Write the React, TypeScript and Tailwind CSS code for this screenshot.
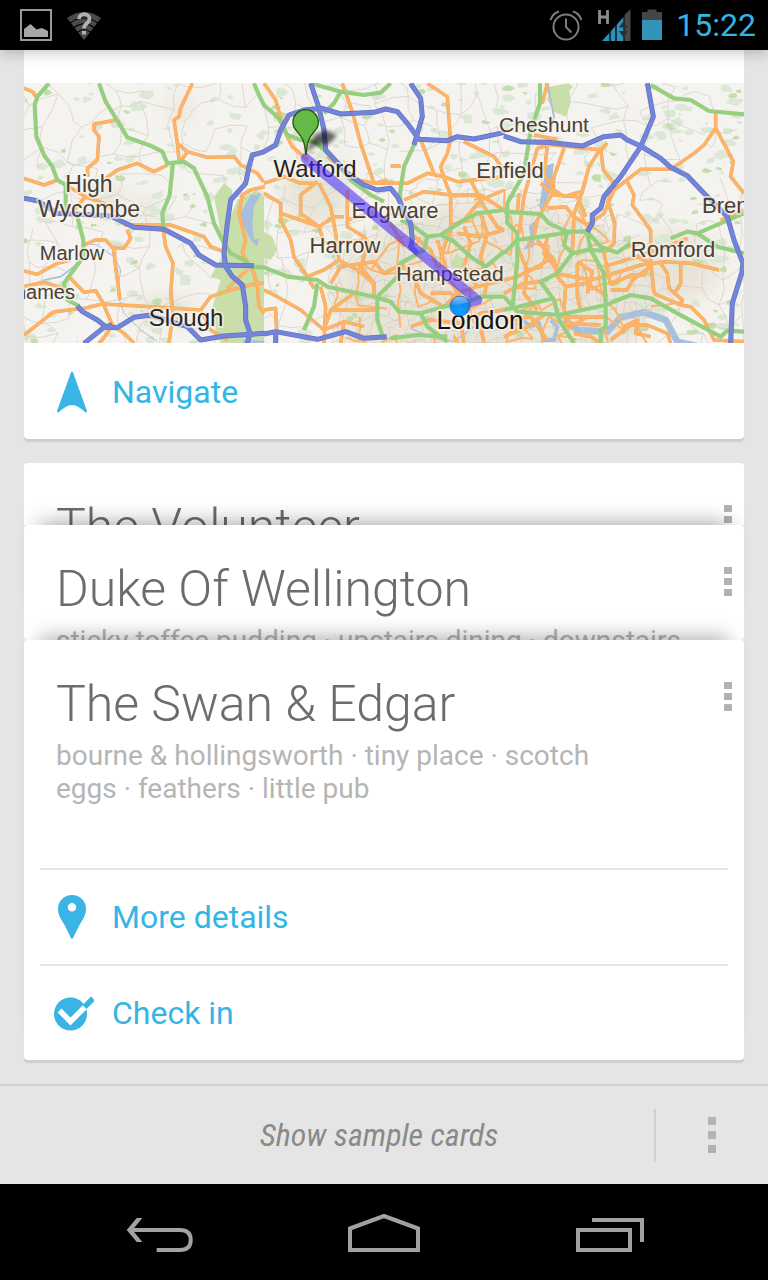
import React from "react";

type Pt = [number, number];

/* Road data is kept in three side-by-side tiles, each 720 units wide. */
const TILES = [
  {
    x: 0,
    green: [
      "75,10 40,50 32,75 37,170 60,225 85,260 100,300 125,315 125,390",
      "160,410 178,480 178,530 145,575 120,610 130,660 165,678",
      "225,10 245,65 285,130 310,172 340,183 380,197 415,215 430,250 480,245 510,265 550,350 570,430 600,490 620,520 660,540 680,560 722,562",
      "447,250 437,345 415,400 418,440",
      "690,10 705,45 722,80",
    ],
    orange: [
      "0,25 25,35 40,55",
      "505,10 470,85 465,110 450,120 460,190 490,215 550,232 630,230 650,255 700,280 718,305",
      "460,190 465,240",
      "490,215 470,245",
      "275,120 210,133 210,150 225,170 220,240 190,265 192,290",
      "245,295 280,270 340,250 390,275 430,255",
      "0,295 60,315 100,300",
      "120,312 185,350 240,370 275,395",
      "185,350 150,390",
      "300,435 440,435 540,470 560,500 600,515",
      "418,450 425,500 447,550 440,640 447,700 435,790",
      "180,495 215,480 245,480 268,505 300,505 320,475 310,450",
      "268,505 275,560 288,660",
      "0,573 40,583 100,550 140,540",
      "140,595 180,637 215,632 235,665 265,735 250,760 225,790",
      "0,620 60,607 120,625",
      "0,765 90,695 180,685 235,672 380,680 450,685 530,690 560,650 620,630 700,610 720,610",
      "265,735 300,760 330,790",
      "530,690 560,750 610,780",
      "722,320 680,330 655,345 645,400 665,480 655,520 690,580 700,620 705,680 720,700",
      "610,625 670,570",
    ],
    blue: [
      "0,355 40,362 100,400 150,402 260,408 330,442 420,448 500,490 525,525 575,555 690,557",
      "722,215 685,225 675,260 665,310 620,360 610,430 600,520 605,560 625,590 655,615 665,680 665,720 678,760 670,790",
      "160,678 175,695 220,720 245,740 265,735",
      "180,790 240,742 280,743 330,712 375,706 410,715 490,740 530,780 600,768 722,760",
    ],
  },
  {
    x: 720,
    green: [
      "0,75 45,115 70,165 110,180 150,185 200,225 260,300 320,345 360,365",
      "140,10 230,35 300,45 350,38 380,10",
      "230,35 210,70 180,100",
      "450,195 420,260 408,340 410,370",
      "410,420 450,440 490,470 530,465 600,420 640,400 720,390",
      "530,465 570,485 620,530 665,560 720,515",
      "490,470 480,510 410,550 400,590 340,650 340,720 360,780",
      "0,562 70,590 160,600 190,620 330,650 380,665 405,695 470,700 540,680 600,670 650,650 722,650",
      "160,610 150,680 120,750",
      "470,700 490,740 550,785",
      "380,775 460,765 550,770",
    ],
    orange: [
      "0,10 35,60 60,150 85,200 130,240",
      "235,10 265,95 290,190 330,310",
      "490,10 550,50 558,160 560,180 550,220 530,260 540,295 560,345 560,440 535,520",
      "470,180 510,280",
      "600,185 690,230 720,270",
      "380,258 410,258",
      "0,310 60,290 110,310 150,310",
      "0,340 50,370 50,420 80,480 90,530 130,590 150,625",
      "160,305 110,345 110,400 165,440 210,410 240,410",
      "165,310 200,380 215,460 225,540",
      "50,400 110,420 165,440 180,490 260,485 300,480",
      "330,310 430,310 490,280 540,290 580,305 720,290",
      "420,360 480,335 560,345 650,345 720,390",
      "250,330 250,440 300,470 310,500 290,560 330,610",
      "190,230 280,300 330,310 370,300",
      "250,420 320,400 380,430 420,500",
      "200,610 230,560 330,545 360,580 410,555",
      "225,540 280,570 330,610 330,650",
      "130,590 180,570 225,540",
      "0,630 40,650 110,690 180,750 240,725 300,740",
      "0,690 35,685 38,755",
      "180,750 200,690 270,640",
      "205,690 340,690",
      "170,620 185,680 180,790",
      "240,725 230,790",
      "410,550 450,590 470,640 540,680",
      "440,460 500,510 520,560 600,600",
      "520,480 545,560 570,620 600,670",
      "600,440 620,490 600,560 640,620",
      "560,440 600,420 650,360 720,330",
      "620,300 660,380 700,440 720,450",
      "580,460 650,470 720,450",
      "650,400 670,460 650,530 670,600 660,650",
      "540,680 580,640 640,620 720,600",
      "440,740 500,720 590,730 650,700 720,690",
      "590,730 600,790",
      "640,700 660,790",
      "500,640 560,640 600,670",
    ],
    blue: [
      "0,215 35,195 50,150 75,105 120,90 175,85 230,102 330,97 365,87 400,95 430,130 465,178 550,182 580,170 630,177 722,157",
      "140,10 165,85 180,150 185,210 250,280 300,315 340,330 380,325 400,350 440,430 445,480 440,500 460,520",
      "440,10 470,55 475,110 450,195",
      "0,762 35,755 160,778 245,755 300,775 368,770",
      "35,750 35,790",
    ],
  },
  {
    x: 1440,
    green: [
      "108,10 108,70 80,150 60,280 10,370 10,430 40,460 40,540 25,690",
      "0,395 110,402 135,430 190,455 250,455 290,500 340,518 380,490",
      "0,520 40,480 130,467 210,455",
      "250,460 260,510 300,580 305,660 305,740 290,750 290,790",
      "190,455 180,495 205,520 160,580 110,605 150,660 165,720 210,790",
      "205,520 250,510 300,512",
      "0,690 150,655",
      "0,650 40,695 165,705 305,675 380,645 440,655 520,700 650,770 670,752 720,755",
      "440,15 510,55 560,60 615,93 720,103",
      "500,475 550,455 580,460 720,400",
      "580,460 640,500 720,520",
    ],
    orange: [
      "130,10 115,70",
      "90,165 155,178 120,200 100,205 60,350 45,460",
      "180,205 150,290 145,340 100,420 90,470",
      "130,200 120,280 150,330 180,350 230,335",
      "95,190 200,200 290,210 310,190",
      "290,205 255,260 230,350 210,400 205,520",
      "290,205 298,270 330,310 310,370",
      "500,268 410,268 330,330 300,400 250,435 210,410 185,380 130,385",
      "500,268 570,220 600,195 635,145 635,100",
      "635,145 665,200 688,245 680,290 720,340",
      "370,305 390,345 385,375 440,450 440,540 450,640",
      "315,375 332,430 330,490 300,520 320,615",
      "110,310 150,345 220,350 245,410",
      "45,340 40,400",
      "100,480 150,540 160,590 185,620",
      "0,600 40,590 100,560 150,530",
      "40,500 70,570 60,640 100,690",
      "110,605 60,610 0,640",
      "150,580 260,600 300,590 410,555 480,545 560,550 645,570",
      "220,550 220,650 230,690",
      "220,545 265,575 250,640",
      "180,620 250,610 310,650",
      "185,620 180,690 200,740 250,710",
      "300,560 400,530 440,550",
      "320,630 370,630 385,600 440,560",
      "320,615 380,585 420,585 440,550",
      "470,550 490,580 495,625 535,660 530,675",
      "530,550 530,610 515,635",
      "450,640 530,675 560,680 600,720 630,780 720,785",
      "165,710 300,712",
      "170,730 290,735",
      "320,780 380,735 430,735 490,760 500,790",
      "360,740 400,720 395,760 440,770",
      "0,720 80,710 130,780",
      "0,770 70,740 120,705",
      "210,760 260,770 290,790",
      "550,475 490,500 400,530",
      "720,390 650,420",
      "130,470 120,520 160,570",
    ],
    blue: [
      "0,168 50,185 130,187 235,198 300,170 350,165 370,180 410,198 470,235 500,262 550,287 600,340 670,410 690,480 717,550 713,580 685,670 680,790",
      "430,10 448,110 410,200 350,290 300,350 290,385 265,405 265,430 250,455",
    ],
  },
];

function makeRandom(seed: number) {
  let s = seed;
  return () => {
    s = (s * 16807) % 2147483647;
    return s / 2147483647;
  };
}

const inCity = (x: number, y: number) => ((x - 1390) / 500) ** 2 + ((y - 640) / 320) ** 2 < 1;

/* Country lanes and city streets: a jittered mesh with some edges left out. */
function streets(step: number, keep: number, seed: number, city: boolean) {
  const rnd = makeRandom(seed);
  const cols = Math.ceil(2160 / step) + 1;
  const rows = Math.ceil(800 / step) + 1;
  const grid: Pt[][] = [];
  for (let r = 0; r < rows; r++) {
    grid.push([]);
    for (let c = 0; c < cols; c++) {
      grid[r].push([Math.round((c + (rnd() - 0.5) * 0.9) * step), Math.round((r + (rnd() - 0.5) * 0.9) * step)]);
    }
  }
  let d = "";
  const edge = (a: Pt, b: Pt) => {
    const drop = rnd() > keep;
    const mx = Math.round((a[0] + b[0]) / 2 + (rnd() - 0.5) * step * 0.3);
    const my = Math.round((a[1] + b[1]) / 2 + (rnd() - 0.5) * step * 0.3);
    if (drop || (city && !inCity(a[0], a[1]))) return;
    d += `M${a[0]},${a[1]}L${mx},${my}L${b[0]},${b[1]}`;
  };
  for (let r = 0; r < rows; r++) {
    for (let c = 0; c < cols; c++) {
      if (c + 1 < cols) edge(grid[r][c], grid[r][c + 1]);
      if (r + 1 < rows) edge(grid[r][c], grid[r + 1][c]);
    }
  }
  return d;
}

function patches(count: number, size: number, seed: number) {
  const rnd = makeRandom(seed);
  let d = "";
  for (let i = 0; i < count; i++) {
    const x = rnd() * 2160;
    const y = rnd() * 800;
    const n = 5 + Math.floor(rnd() * 3);
    const r = size * (0.4 + rnd());
    for (let k = 0; k < n; k++) {
      const a = (k / n) * Math.PI * 2;
      const q = r * (0.4 + rnd() * 0.7);
      d += `${k ? "L" : "M"}${Math.round(x + Math.cos(a) * q * 1.3)},${Math.round(y + Math.sin(a) * q * 0.8)}`;
    }
    d += "Z";
  }
  return d;
}

const LANES = streets(72, 0.68, 77, false);
const CITY_LANES = streets(34, 0.6, 911, true);
const CITY_ROADS = streets(56, 0.4, 4242, true);
const PALE_PATCHES = patches(420, 17, 31);
const GREEN_PATCHES = patches(120, 12, 73);

function Roads({ kind, color, width }: { kind: "green" | "orange" | "blue"; color: string; width: number }) {
  return (
    <g fill="none" stroke={color} strokeWidth={width} strokeLinejoin="round" strokeLinecap="butt">
      {TILES.map((t) => (
        <g key={t.x} transform={`translate(${t.x} 0)`}>
          {t[kind].map((p) => (
            <polyline key={p} points={p} />
          ))}
        </g>
      ))}
    </g>
  );
}

const LABELS: { t: string; x: number; y: number; s: number; c: string; a?: "start" | "middle" | "end" }[] = [
  { t: "High", x: 65, y: 109, s: 23, c: "#4a3f35" },
  { t: "Wycombe", x: 65, y: 134, s: 23, c: "#4a3f35" },
  { t: "Marlow", x: 48, y: 177, s: 20, c: "#4a3f35" },
  { t: "Thames", x: 51, y: 216, s: 20, c: "#4a3f35", a: "end" },
  { t: "Slough", x: 162, y: 243, s: 24, c: "#2a2420" },
  { t: "Watford", x: 291, y: 94, s: 24, c: "#2a2420" },
  { t: "Edgware", x: 371, y: 135, s: 22, c: "#4a3f35" },
  { t: "Harrow", x: 321, y: 170, s: 22, c: "#4a3f35" },
  { t: "Hampstead", x: 426, y: 198, s: 21, c: "#4a3f35" },
  { t: "London", x: 456, y: 246, s: 26, c: "#111111" },
  { t: "Cheshunt", x: 520, y: 49, s: 21, c: "#4a3f35" },
  { t: "Enfield", x: 486, y: 95, s: 22, c: "#4a3f35" },
  { t: "Romford", x: 649, y: 174, s: 22, c: "#4a3f35" },
  { t: "Brentwood", x: 678, y: 130, s: 22, c: "#4a3f35", a: "start" },
];

function RouteMap() {
  return (
    <svg
      viewBox="0 0 720 260"
      preserveAspectRatio="xMidYMid slice"
      className="block h-[260px] w-full"
      role="img"
      aria-label="Route from Watford to London"
    >
      <defs>
        <filter id="soft" x="-20%" y="-20%" width="140%" height="140%">
          <feGaussianBlur stdDeviation="30" />
        </filter>
        <filter id="pinShade" x="-50%" y="-50%" width="200%" height="200%">
          <feGaussianBlur stdDeviation="7" />
        </filter>
        <radialGradient id="dot" cx="50%" cy="75%" r="75%">
          <stop offset="0" stopColor="#12a0ff" />
          <stop offset="0.6" stopColor="#1589f2" />
          <stop offset="1" stopColor="#1c5fc0" />
        </radialGradient>
        <linearGradient id="gloss" x1="0" y1="0" x2="0" y2="1">
          <stop offset="0" stopColor="#ffffff" stopOpacity="0.55" />
          <stop offset="1" stopColor="#ffffff" stopOpacity="0.1" />
        </linearGradient>
      </defs>
      <g transform="translate(0 -3) scale(0.33333)">
        <rect width="2160" height="800" fill="#f4f3ef" />
        <g fill="#e9e4d8" filter="url(#soft)">
          <ellipse cx="1400" cy="660" rx="480" ry="300" />
          <ellipse cx="880" cy="330" rx="110" ry="110" />
          <ellipse cx="1950" cy="560" rx="140" ry="110" />
          <ellipse cx="420" cy="690" rx="100" ry="40" />
          <ellipse cx="250" cy="360" rx="60" ry="45" />
          <ellipse cx="375" cy="390" rx="40" ry="40" />
          <ellipse cx="470" cy="90" rx="40" ry="40" />
        </g>
        <path d={PALE_PATCHES} fill="#dce8d6" />
        <path d={GREEN_PATCHES} fill="#c4deab" />
        <g fill="#c9dfaa">
          <path d="M600,310 625,330 615,420 640,360 700,330 720,350V790H590L560,700 590,600 560,590 600,520 580,400 570,350Z" />
          <path d="M1575,20 1635,10 1640,70 1625,110 1590,95 1570,60Z" />
          <path d="M720,455 745,470 760,510 740,540 720,535Z" />
          <path d="M1285,540 1300,520 1320,550 1310,570 1280,555Z" />
        </g>
        <g fill="#a5bfdd">
          <path d="M680,345 712,340 690,380 685,430 690,480 705,475 700,500 680,480 660,440 650,400Z" />
          <path d="M1570,255 1590,250 1580,330 1555,390 1545,380 1555,320Z" />
          <path d="M1515,440 1535,420 1530,500 1500,510 1520,470Z" />
          <path d="M660,780 720,782V800H650Z" />
        </g>
        <g fill="none" stroke="#a5bfdd">
          <path d="M1620,720 1660,750 1750,755 1790,712 1860,697 1925,720 1960,785 2050,805" strokeWidth="20" />
          <path d="M1440,720 1490,715 1520,740 1545,730 1560,780 1590,780 1600,740 1580,720" strokeWidth="12" />
          <path d="M1570,10 1580,60 1590,110 1580,150" strokeWidth="6" />
          <path d="M180,490 220,495 270,530 290,570 280,640 300,700 350,750 400,785" strokeWidth="3" />
          <path d="M60,600 110,590 150,560 180,520" strokeWidth="5" />
          <path d="M1130,545 1180,520 1200,510" strokeWidth="6" />
          <path d="M1160,745 1230,775 1290,785 1350,740" strokeWidth="4" />
        </g>
        <path d={LANES} fill="none" stroke="#d6cdc4" strokeWidth="2.2" />
        <path d={CITY_LANES} fill="none" stroke="#d0c7bd" strokeWidth="2" />
        <path d={CITY_ROADS} fill="none" stroke="#fdb56c" strokeWidth="6" strokeLinejoin="round" />
        <Roads kind="orange" color="#f0a055" width={10.5} />
        <Roads kind="orange" color="#feb467" width={8.5} />
        <Roads kind="green" color="#96cf80" width={12.5} />
        <Roads kind="blue" color="#6171bd" width={15} />
        <Roads kind="blue" color="#7384db" width={11} />
      </g>
      <g
        fontFamily="'Liberation Sans', Arial, sans-serif"
        stroke="#f7f5f1"
        strokeOpacity="0.65"
        strokeWidth="4"
        strokeLinejoin="round"
        paintOrder="stroke"
      >
        {LABELS.map((l) => (
          <text key={l.t} x={l.x} y={l.y} fontSize={l.s} fill={l.c} textAnchor={l.a ?? "middle"}>
            {l.t}
          </text>
        ))}
      </g>
      <g transform="translate(240 -3) scale(0.33333)">
        <path
          d="M125,235 640,660 605,670"
          fill="none"
          stroke="#3c1eff"
          strokeOpacity="0.53"
          strokeWidth="30"
          strokeLinecap="round"
          strokeLinejoin="round"
        />
        <path d="M124,220 150,165 185,150 220,165 195,192 155,196Z" fill="#000" fillOpacity="0.6" filter="url(#pinShade)" />
        <path
          d="M125,222C122,178 112,170 97,152 82,134 85,113 97,101 113,85 137,85 153,101 165,113 168,134 153,152 138,170 129,178 127,222Z"
          fill="#65b946"
          stroke="#24590f"
          strokeWidth="4"
        />
        <circle cx="588" cy="678" r="30" fill="url(#dot)" stroke="#1d63b8" strokeWidth="2" />
        <path d="M562,672C564,654 575,650 588,650 601,650 612,656 614,670 600,664 580,682 562,672Z" fill="url(#gloss)" />
      </g>
    </svg>
  );
}

function Kebab({ large = false }: { large?: boolean }) {
  const dot = large ? "size-2 bg-[#b2b2b2]" : "h-[7px] w-2 bg-[#b2b2b2]";
  return (
    <span className={large ? "flex flex-col gap-[6px]" : "flex flex-col gap-1"}>
      <span className={dot} />
      <span className={dot} />
      <span className={dot} />
    </span>
  );
}

function PlaceHeader({ name, children }: { name: string; children?: React.ReactNode }) {
  return (
    <div className="flex items-start justify-between pt-[30px] pr-3 pl-8">
      <div className="min-w-0">
        <h2 className="text-[50px] leading-[68px] font-light whitespace-nowrap text-[#6c6c6c]">{name}</h2>
        <p className="pt-px text-[28px] leading-[33px] text-[#b5b5b5]">{children}</p>
      </div>
      <button type="button" aria-label={`Options for ${name}`} className="mt-3 shrink-0">
        <Kebab />
      </button>
    </div>
  );
}

function Action({ icon, divider = false, children }: { icon: React.ReactNode; divider?: boolean; children: React.ReactNode }) {
  return (
    <div className={`mx-4 border-t-2 ${divider ? "border-[#e5e5e5]" : "border-transparent"}`}>
      <button type="button" className="flex h-[94px] w-full items-center gap-4 px-2 text-left text-[32px] text-[#33b5e5]">
        <span className="flex w-12 shrink-0 justify-center">{icon}</span>
        {children}
      </button>
    </div>
  );
}

export default function App() {
  return (
    <div className="flex min-h-screen flex-col bg-[#e5e5e5] font-['Roboto',sans-serif]">
      <header className="relative z-10 flex h-[50px] items-center bg-black pr-3 pl-5 shadow-[0_2px_14px_rgba(0,0,0,0.25)]">
        <svg width="32" height="32" viewBox="0 0 32 32" aria-hidden="true">
          <rect x="1" y="1" width="30" height="30" fill="none" stroke="#9a9a9a" strokeWidth="2" />
          <path d="M4,28V20L10.500,15 16.500,20.500 22,19 28,22V28Z" fill="#a8a8a8" />
        </svg>
        <svg width="36" height="32" viewBox="0 0 36 32" className="ml-[14px]" aria-hidden="true">
          <path d="M1,9Q18,-3 35,9L18,31Z" fill="#4a4a4a" />
          <g fill="none" stroke="#000" strokeWidth="1.200">
            <path d="M4,14Q18,4 32,14" />
            <path d="M8,18.500Q18,11 28,18.500" />
            <path d="M12,23Q18,18 24,23" />
          </g>
          <path d="M13,10C13,3.500 23.500,3.500 23.500,10 23.500,14.500 18,14 18,19.500" fill="none" stroke="#b0b0b0" strokeWidth="3.800" />
          <rect x="16" y="22" width="4" height="3.500" fill="#b0b0b0" />
        </svg>
        <div className="flex-1" />
        <svg width="34" height="32" viewBox="0 0 34 32" fill="none" stroke="#7d7d7d" aria-hidden="true">
          <circle cx="17" cy="18" r="12.500" strokeWidth="2" />
          <path d="M17,9.500V18L22.500,23.500" strokeWidth="2" />
          <path d="M1.500,11Q4,4 10,2.500M32.500,11Q30,4 24,2.500" strokeWidth="2" />
        </svg>
        <svg width="34" height="32" viewBox="0 0 34 32" className="ml-[14px]" aria-hidden="true">
          <path d="M33.500,0V32H27.500V6Z" fill="#484848" />
          <path d="M26.500,8V32H5Z" fill="#3091b8" />
          <path d="M13,20V32M19,14V32" stroke="#000" strokeWidth="1.300" />
          <path d="M26.500,12L31,18.500H22ZM26.500,28.500L31,22H22Z" fill="#1c3640" />
          <path d="M2.500,1V15M10.500,1V15M2.500,8H10.500" fill="none" stroke="#8c8c8c" strokeWidth="2.800" />
        </svg>
        <svg width="20" height="32" viewBox="0 0 20 32" className="ml-[11px]" aria-hidden="true">
          <path d="M0,3H5.500V0.500H14.500V3H20V12H0Z" fill="#454545" />
          <rect y="11" width="20" height="20" fill="#3493ba" />
        </svg>
        <time className="ml-[14px] text-[32px] leading-none text-[#33b5e5]">15:22</time>
      </header>

      <main className="flex flex-1 flex-col gap-6 px-6 pb-6">
        <section className="rounded-b-[4px] bg-white pt-[33px] shadow-[0_3px_1px_#cfcfcf]">
          <RouteMap />
          <Action
            icon={
              <svg width="32" height="42" viewBox="0 0 32 42" aria-hidden="true">
                <path d="M15,1.500Q16,-0.500 17,1.500L31,40Q31,42 29.500,41.500 22,34 16,34 10,34 2.500,41.500 1,42 1,40Z" fill="#39b4e4" />
              </svg>
            }
          >
            Navigate
          </Action>
        </section>

        <section className="flex flex-col">
          <article className="h-[62px] overflow-hidden rounded-t-[4px] bg-white">
            <PlaceHeader name="The Volunteer" />
          </article>
          <article className="h-[115px] rounded-[4px] bg-white shadow-[0_-18px_20px_-16px_rgba(0,0,0,0.35)]">
            <div className="h-full overflow-hidden">
              <PlaceHeader name="Duke Of Wellington">
                sticky toffee pudding · upstairs dining · downstairs
              </PlaceHeader>
            </div>
          </article>
          <article className="rounded-[4px] bg-white shadow-[0_3px_1px_#cfcfcf,0_-18px_20px_-16px_rgba(0,0,0,0.35)]">
            <PlaceHeader name="The Swan & Edgar">
              bourne &amp; hollingsworth · tiny place · scotch
              <br />
              eggs · feathers · little pub
            </PlaceHeader>
            <div className="mt-[63px]">
              <Action
                divider
                icon={
                  <svg width="28" height="44" viewBox="0 0 28 44" aria-hidden="true">
                    <path
                      d="M14,0A14,14 0 0 1 28,14C28,20 25,24 22,29L15,43Q14,45 13,43L6,29C3,24 0,20 0,14A14,14 0 0 1 14,0ZM14,8A4.300,4.300 0 1 0 14,16.600 4.300,4.300 0 0 0 14,8Z"
                      fill="#39b4e4"
                    />
                  </svg>
                }
              >
                More details
              </Action>
              <Action
                divider
                icon={
                  <svg width="44" height="36" viewBox="0 0 44 36" aria-hidden="true">
                    <circle cx="20.500" cy="19" r="16.500" fill="#39b4e4" />
                    <path d="M9.500,15.500L20.500,26.500 36,11" fill="none" stroke="#fff" strokeWidth="5.500" />
                    <path d="M34.500,12L43,3.500" fill="none" stroke="#39b4e4" strokeWidth="5.500" />
                  </svg>
                }
              >
                Check in
              </Action>
            </div>
          </article>
        </section>
      </main>

      <footer>
        <div className="flex h-[100px] items-center border-t-2 border-[#cfcfcf]">
          <button
            type="button"
            className="flex-1 pl-[104px] text-center font-['Roboto_Condensed','Roboto',sans-serif] text-[32px] text-[#8a8a8a] italic"
          >
            Show sample cards
          </button>
          <button
            type="button"
            aria-label="Menu"
            className="flex h-[52px] w-[114px] items-center justify-center border-l-2 border-[#cfcfcf]"
          >
            <Kebab large />
          </button>
        </div>
        <nav className="flex h-24 items-center justify-center bg-black">
          <button type="button" aria-label="Back" className="flex w-[226px] justify-center">
            <svg width="72" height="40" viewBox="0 0 72 40" aria-hidden="true">
              <path d="M10,18H58Q68.700,18 68.700,28 68.700,38 58,38H34.700" fill="none" stroke="#a2a2a2" strokeWidth="4" />
              <path d="M4.700,18L14.700,6H20.300L10.500,18 20.300,30H14.700Z" fill="#a2a2a2" />
            </svg>
          </button>
          <button type="button" aria-label="Home" className="flex w-[226px] justify-center">
            <svg width="72" height="40" viewBox="0 0 72 40" fill="none" stroke="#a2a2a2" strokeWidth="4" aria-hidden="true">
              <path d="M2,38V16.500L36,4 70,16.500V38Z" />
            </svg>
          </button>
          <button type="button" aria-label="Recent apps" className="flex w-[226px] justify-center">
            <svg width="68" height="40" viewBox="0 0 68 40" fill="none" stroke="#a2a2a2" strokeWidth="4" aria-hidden="true">
              <rect x="2" y="18" width="52" height="20" />
              <path d="M16,8H66V30" />
            </svg>
          </button>
        </nav>
      </footer>
    </div>
  );
}
